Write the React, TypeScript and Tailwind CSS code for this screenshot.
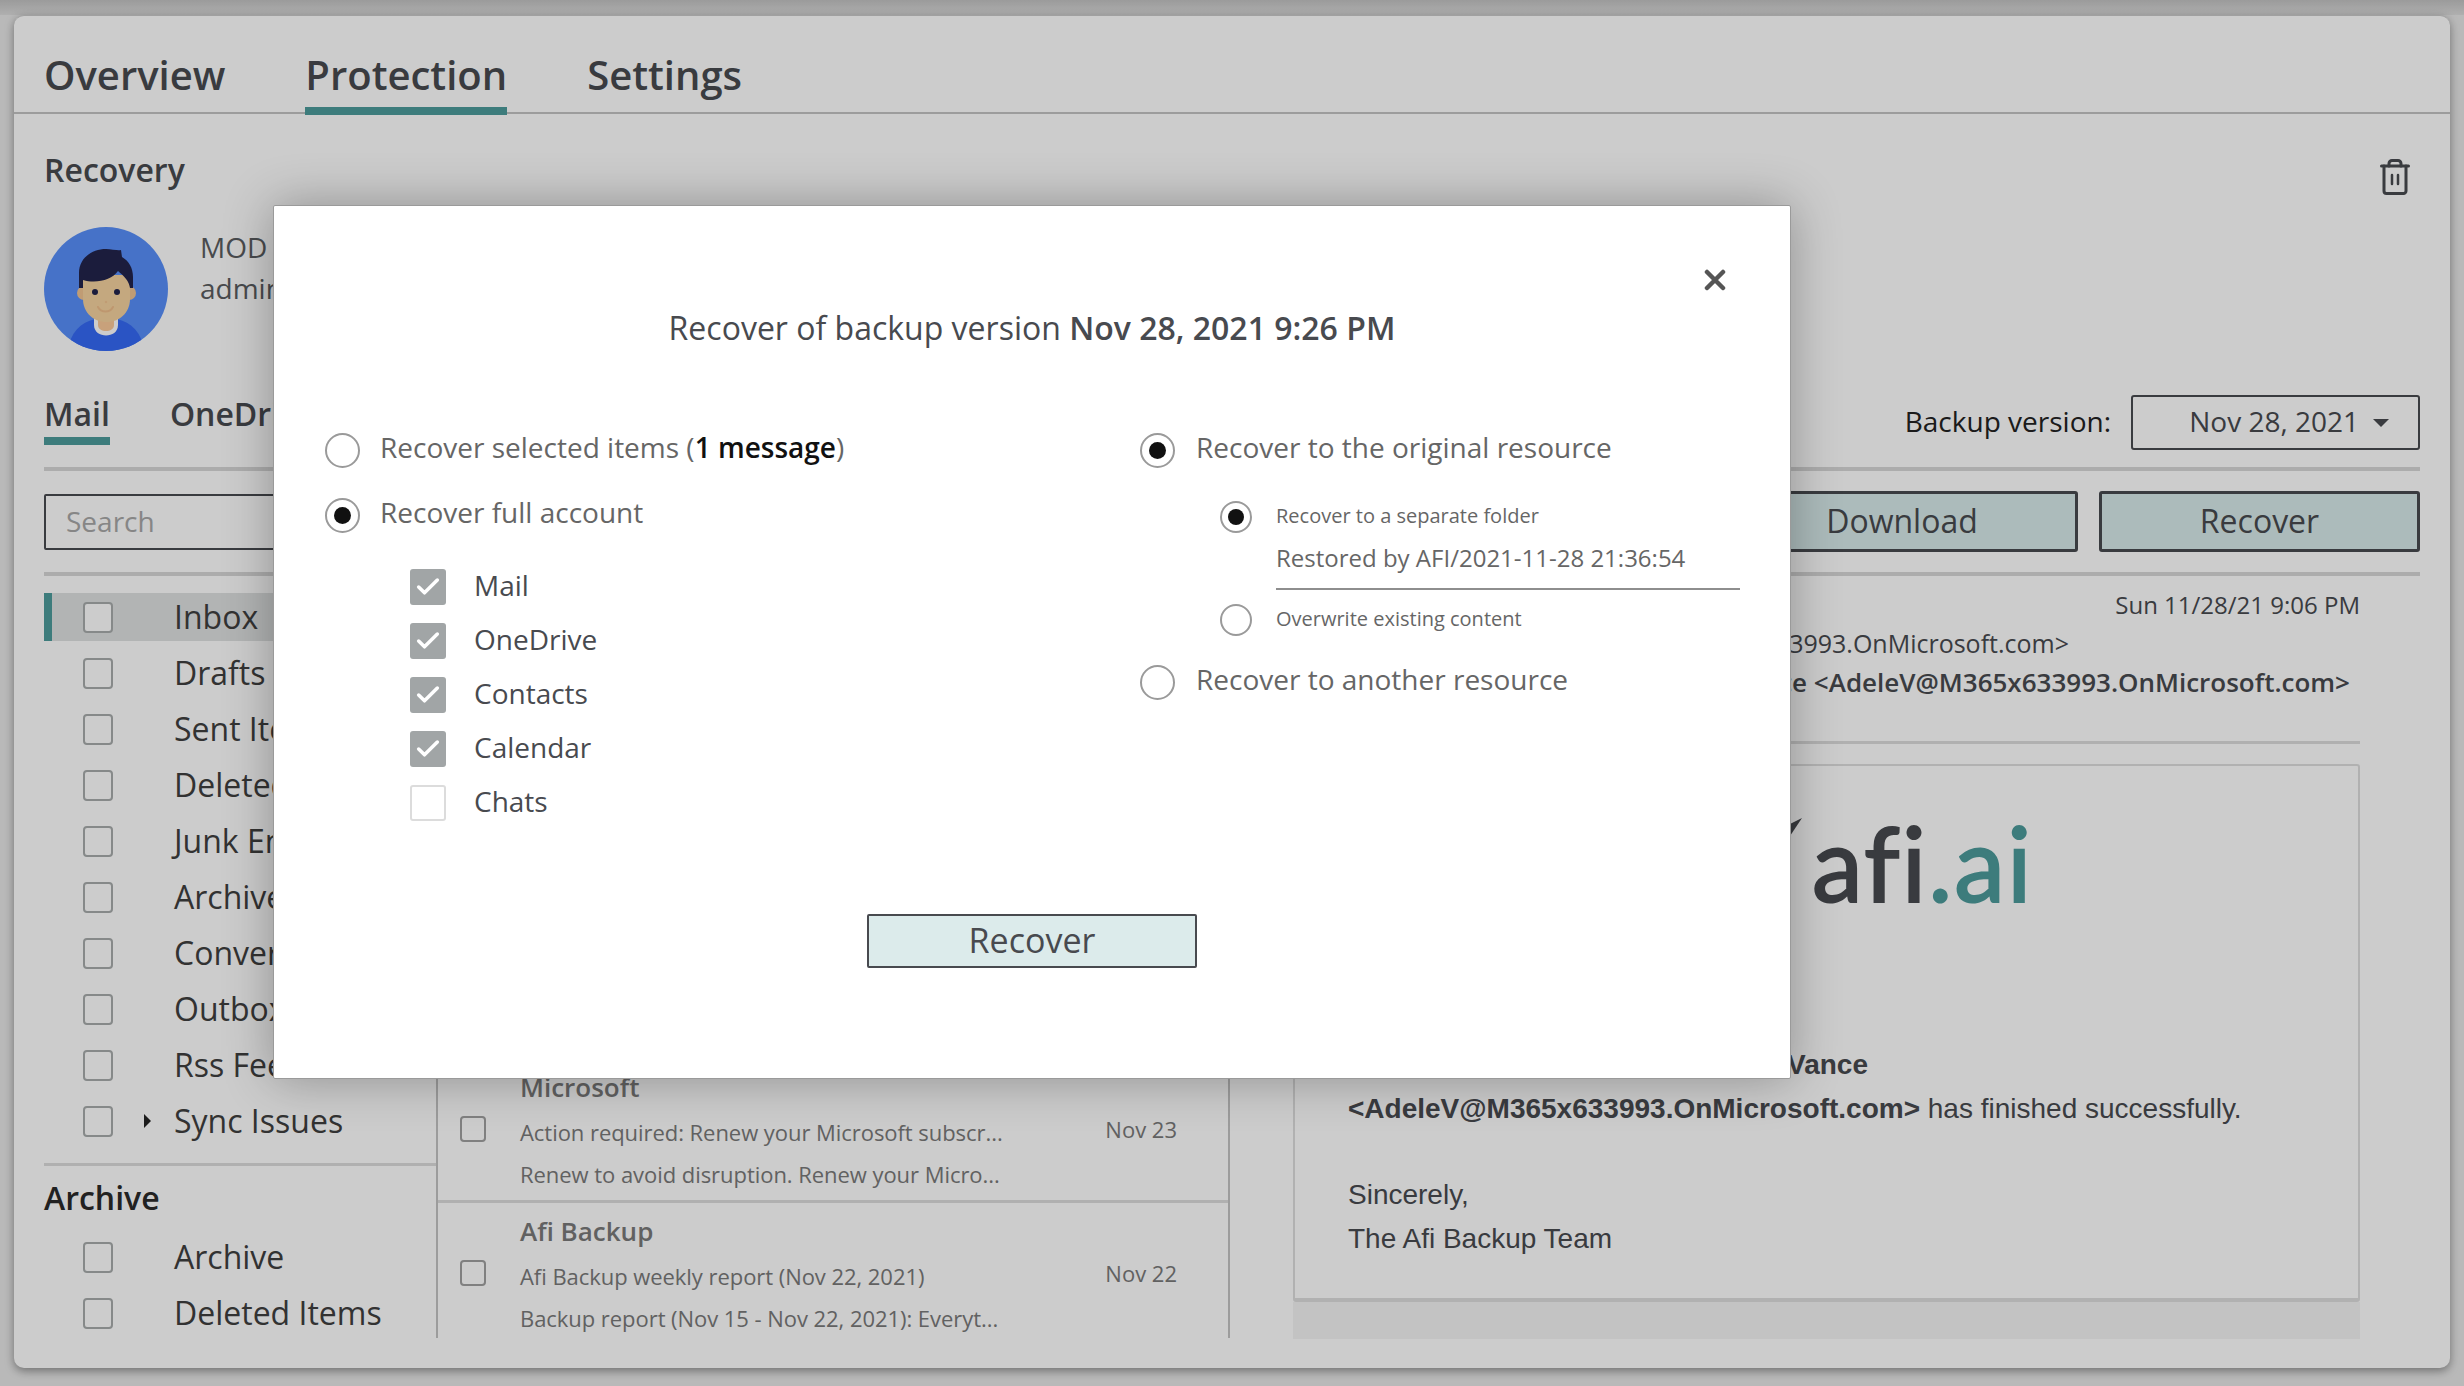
import { Check } from "lucide-react"

const folders = [
  "Inbox",
  "Drafts",
  "Sent Items",
  "Deleted Items",
  "Junk Email",
  "Archive",
  "Conversation History",
  "Outbox",
  "Rss Feeds",
  "Sync Issues",
]

function Radio({ on, small }: { on?: boolean; small?: boolean }) {
  return (
    <span
      className={`flex shrink-0 items-center justify-center rounded-full border-2 border-[#9a9a9a] bg-white ${
        small ? "h-[32px] w-[32px]" : "h-[35px] w-[35px]"
      }`}
    >
      {on && (
        <span
          className={`rounded-full bg-[#111111] ${
            small ? "h-[16px] w-[16px]" : "h-[17px] w-[17px]"
          }`}
        />
      )}
    </span>
  )
}

function Folder({ name, active, caret }: { name: string; active?: boolean; caret?: boolean }) {
  return (
    <div className="relative flex h-[56px] items-center pl-[39px]">
      {active && (
        <div className="absolute top-[4px] right-0 left-0 h-[48px] border-l-[8px] border-[#4d9b9b] bg-[#dfe1e1]" />
      )}
      <span className="relative h-[31px] w-[30px] shrink-0 rounded-[4px] border-2 border-[#a8acac] bg-white" />
      <span className="flex w-[61px] shrink-0 justify-center pl-[7px]">
        {caret && <span className="h-0 w-0 border-y-[7px] border-l-[7px] border-y-transparent border-l-[#222222]" />}
      </span>
      <span className="relative text-[32px] whitespace-nowrap text-[#3f3f3f]">{name}</span>
    </div>
  )
}

function Message({
  from,
  subject,
  preview,
  date,
  last,
}: {
  from: string
  subject: string
  preview: string
  date: string
  last?: boolean
}) {
  return (
    <div className={`relative shrink-0 pl-[82px] ${last ? "h-[135px] overflow-hidden" : "h-[144px] border-b-[3px] border-[#dcdcdc]"}`}>
      <span className="absolute top-[57px] left-[22px] h-[26px] w-[26px] rounded-[4px] border-2 border-[#a0a0a0] bg-white" />
      <div className="flex h-[56px] items-center text-[26px] font-semibold text-[#7a7a7a]">{from}</div>
      <div className="-mt-[1px] flex h-[36px] items-center pr-[51px]">
        <span className="flex-1 text-[22px] tracking-[-0.05px] whitespace-nowrap text-[#7a7a7a]">{subject}</span>
        <span className="-mt-[6px] text-[22px] text-[#7a7a7a]">{date}</span>
      </div>
      <div className="mt-[6px] flex h-[36px] items-center text-[22px] tracking-[-0.05px] whitespace-nowrap text-[#7a7a7a]">{preview}</div>
    </div>
  )
}

function Avatar() {
  return (
    <svg viewBox="0 0 124 124" className="h-[124px] w-[124px] shrink-0">
      <defs>
        <clipPath id="avatar-clip">
          <circle cx="62" cy="62" r="62" />
        </clipPath>
      </defs>
      <g clipPath="url(#avatar-clip)">
        <rect width="124" height="124" fill="#588ffa" />
        <path d="M24 124c2-18 12-29 28-32h20c16 3 26 14 28 32z" fill="#3569f5" />
        <path d="M50 90v8c0 14 24 14 24 0v-8z" fill="#ffffff" />
        <path d="M54 88h16v10c0 8-16 8-16 0z" fill="#faca9a" />
        <circle cx="40" cy="66" r="7" fill="#f0c492" />
        <circle cx="85" cy="66" r="7" fill="#f0c492" />
        <path d="M39 48h47v24c0 14-11 23-23.5 23S39 86 39 72z" fill="#f6d39f" />
        <path d="M35 61V46c0-15 13-24 27-24 6 0 12 2 15 1l1 7c7 4 11 11 11 20v11h-3c-1-7-6-12-12-17-6 9-22 13-35 9v8z" fill="#22234b" />
        <circle cx="51" cy="65" r="3" fill="#22234b" />
        <circle cx="73" cy="65" r="3" fill="#22234b" />
        <circle cx="62" cy="75" r="1.3" fill="#f0c492" />
        <path d="M54 80c3 6 12 6 15 0" stroke="#eebd8b" strokeWidth="2" strokeLinecap="round" fill="none" />
      </g>
    </svg>
  )
}

function Trash() {
  return (
    <svg viewBox="0 0 30 36" fill="none" stroke="#484a4f" strokeWidth="3" strokeLinecap="round" strokeLinejoin="round" className="mt-[12px] h-[36px] w-[30px]">
      <path d="M1.5 7h27" />
      <path d="M9 7V4.5a3 3 0 0 1 3-3h6a3 3 0 0 1 3 3V7" />
      <path d="M4 7v25a2.5 2.5 0 0 0 2.5 2.5h17A2.5 2.5 0 0 0 26 32V7" />
      <path d="M12 16v9" strokeWidth="2.5" />
      <path d="M18 16v9" strokeWidth="2.5" />
    </svg>
  )
}

export default function App() {
  return (
    <div className="relative h-[1386px] w-[2464px] overflow-hidden bg-[#e8e8e8] font-['Open_Sans',sans-serif] text-[#484a4f]">
      <div className="absolute inset-x-0 top-0 h-[15px] bg-gradient-to-b from-[#c2c2c2] to-[#dcdcdc]" />

      {/* page under the modal */}
      <div className="absolute top-[15px] left-[14px] flex h-[1353px] w-[2436px] flex-col rounded-[10px] border-t border-[#c8c8c8] bg-white shadow-[0_3px_10px_rgba(0,0,0,0.4)]">
        <div className="flex h-[98px] shrink-0 gap-[80px] border-b-2 border-[#c4c4c4] px-[30px] text-[40px] font-semibold">
          <div className="flex h-[99px] items-center border-b-[8px] border-transparent pt-[27px]">Overview</div>
          <div className="flex h-[99px] items-center border-b-[8px] border-[#4d9b9b] pt-[27px]">Protection</div>
          <div className="flex h-[99px] items-center border-b-[8px] border-transparent pt-[27px]">Settings</div>
        </div>

        <div className="flex min-h-0 flex-1 flex-col px-[30px] pb-[30px]">
          <div className="flex h-[113px] shrink-0 items-center justify-between pr-[10px]">
            <h2 className="pb-[2px] text-[32px] font-semibold">Recovery</h2>
            <Trash />
          </div>

          <div className="flex shrink-0 items-start gap-[32px]">
            <Avatar />
            <div className="text-[28px] leading-[41px] text-[#5b5d61]">
              <div>MOD Administrator</div>
              <div>admin@M365x633993.OnMicrosoft.com</div>
            </div>
          </div>

          <div className="mt-[44px] flex h-[55px] shrink-0 items-center justify-between">
            <div className="flex items-center gap-[60px] pb-[17px] text-[32px] font-semibold">
              <div className="relative">
                Mail
                <div className="absolute -bottom-[7px] left-0 h-[8px] w-full bg-[#4d9b9b]" />
              </div>
              <div>OneDrive</div>
            </div>
            <div className="flex items-center gap-[20px]">
              <span className="pb-[4px] text-[28px] text-[#222222]">Backup version:</span>
              <div className="flex h-[55px] w-[289px] items-center justify-end gap-[14px] rounded-[3px] border-2 border-[#484a4f] pr-[29px] pb-[3px] text-[28px]">
                Nov 28, 2021
                <span className="mt-[3px] h-0 w-0 border-x-[8px] border-t-[8px] border-x-transparent border-t-[#484a4f]" />
              </div>
            </div>
          </div>

          <div className="mt-[17px] flex h-[109px] shrink-0 items-center justify-between border-y-4 border-[#d8d8d8]">
            <div className="flex h-[56px] w-[600px] items-center rounded-[2px] border-2 border-[#484a4f] pb-[2px] pl-[20px] text-[28px] text-[#a8a8a8]">
              Search
            </div>
            <div className="flex gap-[21px] text-[32px]">
              <button className="h-[61px] w-[352px] rounded-[3px] border-[3px] border-[#484a4f] bg-[#d8eaea] pb-[2px]">Download</button>
              <button className="h-[61px] w-[321px] rounded-[3px] border-[3px] border-[#484a4f] bg-[#d8eaea] pb-[2px]">Recover</button>
            </div>
          </div>

          <div className="flex min-h-0 flex-1">
            <div className="w-[394px] shrink-0 border-r-2 border-[#c4c4c4] pt-[13px]">
              {folders.map((f, i) => (
                <Folder key={f} name={f} active={i === 0} caret={f === "Sync Issues"} />
              ))}
              <div className="mt-[14px] border-t-[3px] border-[#dcdcdc] pt-[8px] text-[32px] font-semibold text-[#2a2a2a]">
                Archive
              </div>
              <div className="mt-[7px]">
                <Folder name="Archive" />
                <Folder name="Deleted Items" />
              </div>
            </div>

            <div className="flex w-[792px] shrink-0 flex-col justify-end overflow-hidden border-r-2 border-[#c4c4c4]">
              <Message
                from="Microsoft"
                subject="Action required: Renew your Microsoft subscr..."
                preview="Renew to avoid disruption. Renew your Micro..."
                date="Nov 23"
              />
              <Message
                last
                from="Afi Backup"
                subject="Afi Backup weekly report (Nov 22, 2021)"
                preview="Backup report (Nov 15 - Nov 22, 2021): Everyt..."
                date="Nov 22"
              />
            </div>

            <div className="flex min-w-0 flex-1 flex-col pr-[60px] pl-[63px]">
              <div className="h-[168px] shrink-0 border-b-[3px] border-[#dcdcdc] pt-[10px] text-right">
                <div className="text-[24px] leading-[38px]">Sun 11/28/21 9:06 PM</div>
                <div className="pr-[291px] text-[25px] leading-[39px] whitespace-nowrap">MOD Administrator &lt;admin@M365x633993.OnMicrosoft.com&gt;</div>
                <div className="pr-[10px] text-[26px] leading-[38px] font-semibold whitespace-nowrap">To: Adele Vance &lt;AdeleV@M365x633993.OnMicrosoft.com&gt;</div>
              </div>
              <div className="mt-[20px] flex h-[538px] shrink-0 flex-col rounded-[3px] border-2 border-b-[4px] border-[#dedede] pl-[53px] font-['Liberation_Sans',sans-serif] text-[28px] leading-[44px]">
                <div className="relative mt-[37px] flex h-[120px] items-end pl-[464px] font-['Lato',sans-serif] text-[102px] leading-[120px] tracking-[2px] [-webkit-text-stroke:2px_currentColor] [font-variant-ligatures:none]">
                  <svg viewBox="0 0 12 18" className="absolute top-[15px] left-[442px] h-[18px] w-[12px]" fill="#484a4f">
                    <path d="M12 0L0 18V6z" />
                  </svg>
                  <span>afi</span>
                  <span className="text-[#4d9b9b]">.ai</span>
                </div>
                <div className="mt-[120px] w-[520px] text-right font-bold whitespace-nowrap">Restore of the account Adele Vance</div>
                <div className="whitespace-nowrap">
                  <b>&lt;AdeleV@M365x633993.OnMicrosoft.com&gt;</b> has finished successfully.
                </div>
                <div className="mt-[42px]">Sincerely,</div>
                <div>The Afi Backup Team</div>
              </div>
              <div className="h-[37px] shrink-0 bg-[#f4f4f4]" />
            </div>
          </div>
        </div>
      </div>

      {/* modal */}
      <div className="absolute inset-0 bg-black/20">
        <div className="absolute top-[205px] left-[273px] h-[874px] w-[1518px] rounded-[2px] border border-[#9a9a9a] bg-white px-[51px] pt-[99px] shadow-[0_0_50px_rgba(0,0,0,0.3)]">
          <button className="absolute top-[63px] right-[64px] text-[#555555]">
            <svg viewBox="0 0 22 22" className="h-[22px] w-[22px]" stroke="currentColor" strokeWidth="4.5" strokeLinecap="round">
              <path d="M3 3l16 16M19 3L3 19" />
            </svg>
          </button>

          <h1 className="h-[46px] text-center text-[32px] leading-[46px] text-[#484a4f]">
            Recover of backup version <b className="font-semibold">Nov 28, 2021 9:26 PM</b>
          </h1>

          <div className="mt-[81px] flex text-[28px] text-[#666666]">
            <div className="w-[815px] shrink-0">
              <label className="flex h-[36px] items-center gap-[20px]">
                <Radio />
                <span className="pb-[7px]">
                  Recover selected items (<b className="font-semibold text-[#111111]">1 message</b>)
                </span>
              </label>
              <label className="mt-[29px] flex h-[36px] items-center gap-[20px]">
                <Radio on />
                <span className="pb-[7px]">Recover full account</span>
              </label>
              <div className="mt-[36px] flex flex-col gap-[18px] pl-[85px] text-[#484a4f]">
                {["Mail", "OneDrive", "Contacts", "Calendar", "Chats"].map((name) => (
                  <label key={name} className="flex h-[36px] items-center gap-[28px]">
                    {name === "Chats" ? (
                      <span className="h-[36px] w-[36px] rounded-[3px] border-2 border-[#dcdcdc]" />
                    ) : (
                      <span className="flex h-[36px] w-[36px] items-center justify-center rounded-[3px] bg-[#a1a5a6]">
                        <Check size={28} strokeWidth={3} className="text-white" />
                      </span>
                    )}
                    <span className="pb-[5px]">{name}</span>
                  </label>
                ))}
              </div>
            </div>

            <div className="flex-1">
              <label className="flex h-[36px] items-center gap-[21px]">
                <Radio on />
                <span className="pb-[7px]">Recover to the original resource</span>
              </label>
              <div className="mt-[33px] pl-[80px]">
                <label className="flex h-[32px] items-center gap-[24px] text-[20px]">
                  <Radio on small />
                  <span className="pb-[2px]">Recover to a separate folder</span>
                </label>
                <div className="mt-[7px] ml-[56px] h-[50px] w-[464px] border-b-2 border-[#8e8e8e] text-[24px] leading-[36px]">
                  Restored by AFI/2021-11-28 21:36:54
                </div>
                <label className="mt-[14px] flex h-[32px] items-center gap-[24px] text-[20px]">
                  <Radio small />
                  <span className="pb-[2px]">Overwrite existing content</span>
                </label>
              </div>
              <label className="mt-[28px] flex h-[36px] items-center gap-[21px]">
                <Radio />
                <span className="pb-[7px]">Recover to another resource</span>
              </label>
            </div>
          </div>

          <div className="mt-[93px] flex justify-center">
            <button className="h-[54px] w-[330px] rounded-[2px] border-2 border-[#484a4f] bg-[#dcebeb] pb-[3px] text-[34px] leading-none text-[#484a4f]">
              Recover
            </button>
          </div>
        </div>
      </div>
    </div>
  )
}
